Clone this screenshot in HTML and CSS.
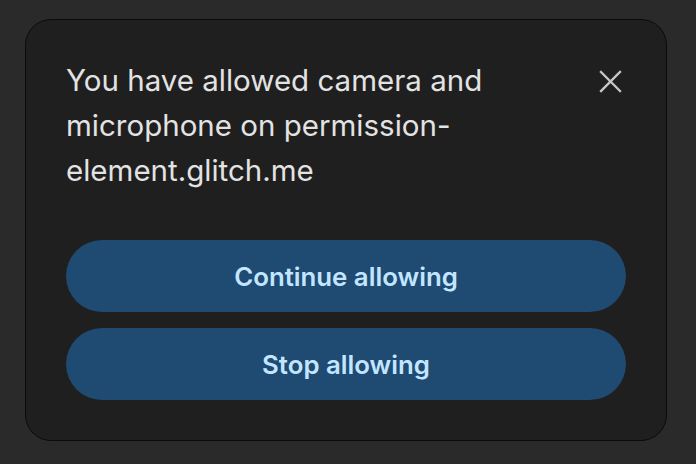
FILE: index.html
```html
<!DOCTYPE html>
<html>
<head>
<meta charset="utf-8">
<link rel="stylesheet" href="styles.css">
</head>
<body>
<div class="card">
  <div class="head">
    <p class="msg">You have allowed camera and microphone on permission-element.glitch.me</p>
    <button class="close" aria-label="Close">
      <svg width="23" height="23" viewBox="0 0 23 23"><path d="M2 2L21 21M21 2L2 21" stroke="#c7c7c7" stroke-width="2.3" stroke-linecap="square"/></svg>
    </button>
  </div>
  <div class="actions">
    <button class="btn">Continue allowing</button>
    <button class="btn">Stop allowing</button>
  </div>
</div>
</body>
</html>
```
FILE: styles.css
```css
html, body {
  margin: 0;
  padding: 0;
  background: #2a2a2a;
  width: 696px;
  height: 464px;
  overflow: hidden;
  font-family: Inter, "Noto Sans", sans-serif;
}
body {
  padding: 19px 0 0 25px;
  box-sizing: border-box;
}
.card {
  width: 642px;
  height: 422px;
  box-sizing: border-box;
  background: #1f1f1f;
  border: 1px solid #0b0b0b;
  border-radius: 26px;
  padding: 38px 40px 0 40px;
}
.head {
  display: flex;
  justify-content: space-between;
  align-items: flex-start;
}
.msg {
  margin: 0;
  width: 480px;
  color: #e3e3e3;
  font-size: 29.5px;
  line-height: 45px;
}
.close {
  background: none;
  border: none;
  padding: 0;
  margin: 12px 4px 0 0;
  width: 23px;
  height: 23px;
  display: flex;
}
.actions {
  margin-top: 47px;
  display: flex;
  flex-direction: column;
  gap: 16px;
}
.btn {
  height: 72px;
  border: none;
  border-radius: 36px;
  background: #1f4a72;
  color: #c2e6ff;
  font-family: Inter, "Noto Sans", sans-serif;
  font-size: 25.8px;
  font-weight: 600;
  width: 560px;
}
```
